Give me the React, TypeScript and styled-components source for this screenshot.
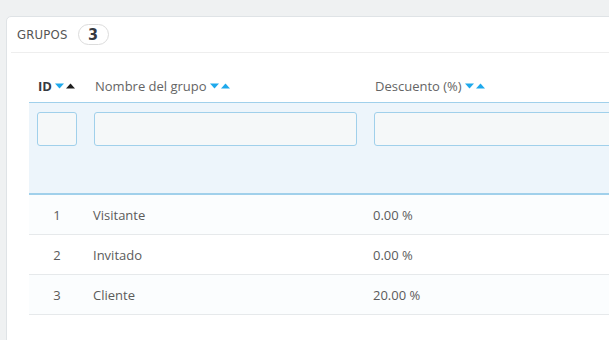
import React from 'react'
import styled, { createGlobalStyle } from 'styled-components'

const GlobalStyle = createGlobalStyle`
  html, body {
    margin: 0;
    padding: 0;
    background: #eff1f2;
    overflow: hidden;
    font-family: "Open Sans", "Noto Sans", sans-serif;
  }
`

const Panel = styled.div`
  margin: 16px 0 0 6px;
  width: 660px;
  height: 340px;
  background: #ffffff;
  border: 1px solid #dfe3e6;
  border-radius: 5px;
  box-sizing: border-box;
`

const Heading = styled.div`
  display: flex;
  align-items: center;
  gap: 10px;
  margin-left: 4px;
  padding: 0 6px;
  height: 35px;
  border-bottom: 1px solid #eeeeee;
  font-family: "DejaVu Sans Condensed", "DejaVu Sans", sans-serif;
  font-stretch: condensed;
  font-size: 13px;
  letter-spacing: 0.2px;
  color: #555555;
  text-transform: uppercase;
`

const Badge = styled.span`
  display: inline-flex;
  align-items: center;
  justify-content: center;
  width: 31px;
  height: 21px;
  box-sizing: border-box;
  border: 1px solid #dcdcdc;
  border-radius: 11px;
  font-size: 16px;
  font-weight: 700;
  color: #363a41;
`

const Table = styled.div`
  margin: 17px 0 0 22px;
  width: 620px;
`

const Grid = styled.div`
  display: grid;
  grid-template-columns: 56px 280px 1fr;
  box-sizing: border-box;
`

const Row = styled(Grid)<{ $shade?: boolean }>`
  background: ${p => (p.$shade ? '#fbfdfe' : '#ffffff')};
  border-bottom: 1px solid #e6e9eb;
  height: 40px;
  align-items: center;
  font-size: 13px;
  color: #5b5b5b;
`

const HeadRow = styled(Grid)`
  height: 33px;
  align-items: center;
  border-bottom: 1px solid #a0d0eb;
  font-size: 13px;
  color: #656565;
`

const FilterRow = styled(Grid)`
  height: 92px;
  align-items: start;
  padding-top: 9px;
  background: #edf5fb;
  border-bottom: 2px solid #a0d0eb;
`

const HeadCell = styled.div<{ $bold?: boolean }>`
  display: flex;
  align-items: center;
  padding-left: ${p => (p.$bold ? '9px' : '10px')};
  font-weight: ${p => (p.$bold ? 700 : 400)};
  color: ${p => (p.$bold ? '#363a41' : '#656565')};
`

const Cell = styled.div<{ $center?: boolean }>`
  padding-left: ${p => (p.$center ? '0' : '8px')};
  text-align: ${p => (p.$center ? 'center' : 'left')};
`

const FilterCell = styled.div<{ $first?: boolean }>`
  padding: 0 8px 0 ${p => (p.$first ? '8px' : '9px')};
`

const FilterInput = styled.input<{ $w?: number }>`
  display: block;
  width: ${p => (p.$w ? `${p.$w}px` : '100%')};
  height: 34px;
  box-sizing: border-box;
  border: 1px solid #a0d0eb;
  border-radius: 3px;
  background: #f5f8f9;
  outline: none;
`

const Arrows = styled.span`
  display: inline-flex;
  align-items: center;
  gap: 2px;
  margin-left: 3px;
`

const Tri: React.FC<{ up?: boolean; color: string }> = ({ up, color }) => (
  <svg width="9" height="6" viewBox="0 0 9 6">
    <path d={up ? 'M0 5.5 L4.5 0.5 L9 5.5 Z' : 'M0 0.5 L9 0.5 L4.5 5.5 Z'} fill={color} />
  </svg>
)

const SortArrows: React.FC<{ activeUp?: boolean }> = ({ activeUp }) => (
  <Arrows>
    <Tri color="#1ea9ec" />
    <Tri up color={activeUp ? '#1e1e1e' : '#1ea9ec'} />
  </Arrows>
)

const groups = [
  { id: 1, name: 'Visitante', discount: '0.00 %' },
  { id: 2, name: 'Invitado', discount: '0.00 %' },
  { id: 3, name: 'Cliente', discount: '20.00 %' },
]

const App: React.FC = () => (
  <>
    <GlobalStyle />
    <Panel>
      <Heading>
        Grupos <Badge>3</Badge>
      </Heading>
      <Table>
        <HeadRow>
          <HeadCell $bold>
            ID <SortArrows activeUp />
          </HeadCell>
          <HeadCell>
            Nombre del grupo <SortArrows />
          </HeadCell>
          <HeadCell>
            Descuento (%) <SortArrows />
          </HeadCell>
        </HeadRow>
        <FilterRow>
          <FilterCell $first>
            <FilterInput $w={40} />
          </FilterCell>
          <FilterCell>
            <FilterInput />
          </FilterCell>
          <FilterCell>
            <FilterInput />
          </FilterCell>
        </FilterRow>
        {groups.map((g, i) => (
          <Row key={g.id} $shade={i % 2 === 0}>
            <Cell $center>{g.id}</Cell>
            <Cell>{g.name}</Cell>
            <Cell>{g.discount}</Cell>
          </Row>
        ))}
      </Table>
    </Panel>
  </>
)

export default App
